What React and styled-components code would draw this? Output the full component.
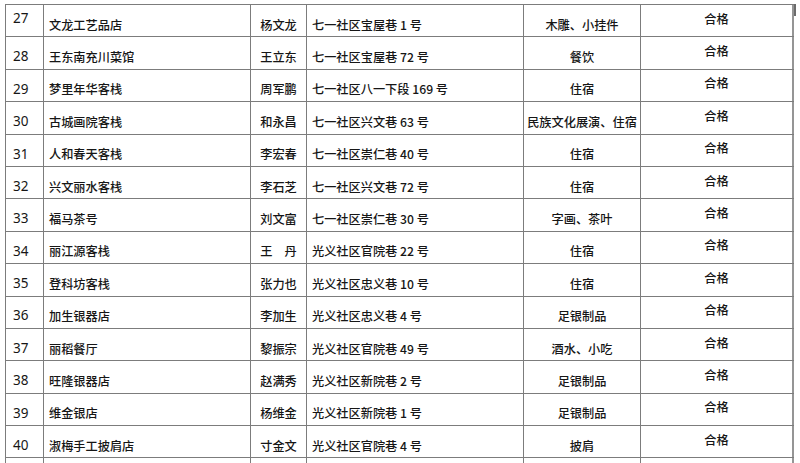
import React from 'react'
import styled, {createGlobalStyle} from 'styled-components'

/**
 * DATA
 */
const rows = [
  ['27', '文龙工艺品店', '杨文龙', '七一社区宝屋巷 1 号', '木雕、小挂件'],
  ['28', '王东南充川菜馆', '王立东', '七一社区宝屋巷 72 号', '餐饮'],
  ['29', '梦里年华客栈', '周军鹏', '七一社区八一下段 169 号', '住宿'],
  ['30', '古城画院客栈', '和永昌', '七一社区兴文巷 63 号', '民族文化展演、住宿'],
  ['31', '人和春天客栈', '李宏春', '七一社区崇仁巷 40 号', '住宿'],
  ['32', '兴文丽水客栈', '李石芝', '七一社区兴文巷 72 号', '住宿'],
  ['33', '福马茶号', '刘文富', '七一社区崇仁巷 30 号', '字画、茶叶'],
  ['34', '丽江源客栈', '王\u3000丹', '光义社区官院巷 22 号', '住宿'],
  ['35', '登科坊客栈', '张力也', '光义社区忠义巷 10 号', '住宿'],
  ['36', '加生银器店', '李加生', '光义社区忠义巷 4 号', '足银制品'],
  ['37', '丽稻餐厅', '黎振宗', '光义社区官院巷 49 号', '酒水、小吃'],
  ['38', '旺隆银器店', '赵满秀', '光义社区新院巷 2 号', '足银制品'],
  ['39', '维金银店', '杨维金', '光义社区新院巷 1 号', '足银制品'],
  ['40', '淑梅手工披肩店', '寸金文', '光义社区官院巷 4 号', '披肩'],
]

const widths = [38, 207, 56, 217, 117, 153]

/**
 * STYLING
 */
const GlobalStyle = createGlobalStyle`
  body {
    margin: 0;
    background: #fff;
    overflow: hidden;
  }
`

const Page = styled.div`
  position: relative;
  width: 800px;
  height: 463px;
  overflow: hidden;
  padding: 4px 0 0 5px;
  box-sizing: border-box;
  font-family: "Noto Sans CJK SC", "Noto Sans", sans-serif;
  font-size: 12.2px;
  font-weight: 500;
  color: #161616;
`

const Table = styled.div`
  width: 789px;
  border-top: 1px solid #7c7c7c;
  border-left: 1px solid #7c7c7c;
  box-sizing: border-box;
`

const Row = styled.div`
  display: grid;
  grid-template-columns: ${widths.map(w => w + 'px').join(' ')};
  height: 32.4px;
  box-sizing: border-box;
  border-bottom: 1px solid #7c7c7c;
`

const Cell = styled.div`
  display: flex;
  align-items: center;
  justify-content: ${p => (p.$center ? 'center' : 'flex-start')};
  padding: ${p => (p.$raised ? '0 0 4px' : '8px 0 0')};
  padding-left: ${p => p.$indent || 0}px;
  box-sizing: border-box;
  border-right: 1px solid #7c7c7c;
  white-space: nowrap;
  line-height: 1;
  &:last-child {
    border-right: 2px solid #959595;
  }
`

const NumCell = styled(Cell)`
  font-family: "Noto Sans", "Open Sans", sans-serif;
  font-size: 13.5px;
  font-weight: 400;
`

const ScrollThumb = styled.div`
  position: absolute;
  top: 4px;
  right: 4px;
  width: 2px;
  height: 12px;
  background: #6b6b6b;
`

/**
 * COMPONENT
 */
const App = () => (
  <Page>
    <GlobalStyle />
    <Table>
      {rows.map(([no, shop, owner, addr, biz], i) => (
        <Row key={no}>
          <NumCell $indent={7} $raised={i === 0}>{no}</NumCell>
          <Cell $indent={5}>{shop}</Cell>
          <Cell $center>{owner}</Cell>
          <Cell $indent={5}>{addr}</Cell>
          <Cell $center>{biz}</Cell>
          <Cell $center $raised>合格</Cell>
        </Row>
      ))}
      <Row>
        {widths.map((w, i) => <Cell key={i} />)}
      </Row>
    </Table>
    <ScrollThumb />
  </Page>
)

export default App
